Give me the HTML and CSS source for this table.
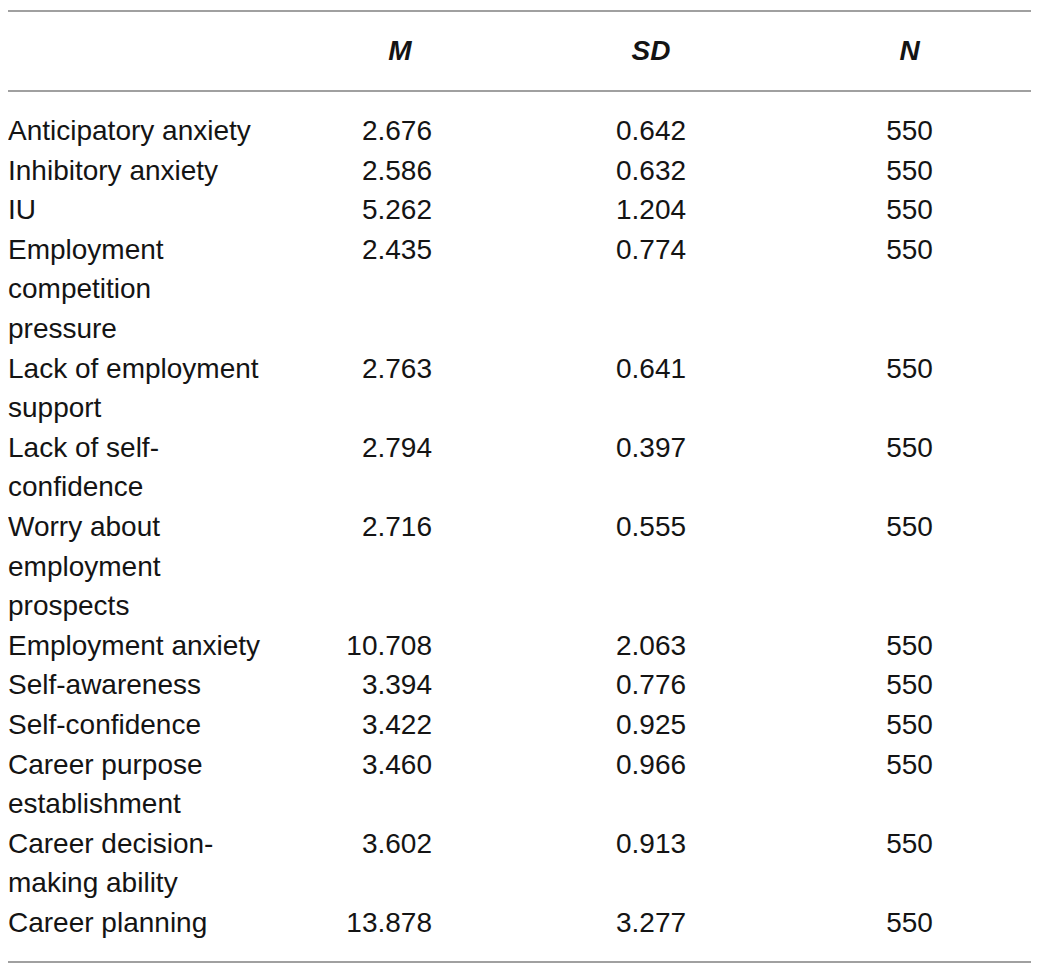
FILE: index.html
```html
<!DOCTYPE html>
<html>
<head>
<meta charset="utf-8">
<link rel="stylesheet" href="styles.css">
</head>
<body>
<table class="stats">
  <colgroup>
    <col class="c-label">
    <col class="c-m">
    <col class="c-sd">
    <col class="c-n">
  </colgroup>
  <thead>
    <tr>
      <th class="label"></th>
      <th class="m">M</th>
      <th class="sd">SD</th>
      <th class="n">N</th>
    </tr>
  </thead>
  <tbody>
    <tr class="first"><td class="label">Anticipatory anxiety</td><td class="m">2.676</td><td class="sd">0.642</td><td class="n">550</td></tr>
    <tr><td class="label">Inhibitory anxiety</td><td class="m">2.586</td><td class="sd">0.632</td><td class="n">550</td></tr>
    <tr><td class="label">IU</td><td class="m">5.262</td><td class="sd">1.204</td><td class="n">550</td></tr>
    <tr><td class="label">Employment competition pressure</td><td class="m">2.435</td><td class="sd">0.774</td><td class="n">550</td></tr>
    <tr><td class="label">Lack of employment support</td><td class="m">2.763</td><td class="sd">0.641</td><td class="n">550</td></tr>
    <tr><td class="label">Lack of self-confidence</td><td class="m">2.794</td><td class="sd">0.397</td><td class="n">550</td></tr>
    <tr><td class="label">Worry about employment prospects</td><td class="m">2.716</td><td class="sd">0.555</td><td class="n">550</td></tr>
    <tr><td class="label">Employment anxiety</td><td class="m">10.708</td><td class="sd">2.063</td><td class="n">550</td></tr>
    <tr><td class="label">Self-awareness</td><td class="m">3.394</td><td class="sd">0.776</td><td class="n">550</td></tr>
    <tr><td class="label">Self-confidence</td><td class="m">3.422</td><td class="sd">0.925</td><td class="n">550</td></tr>
    <tr><td class="label">Career purpose establishment</td><td class="m">3.460</td><td class="sd">0.966</td><td class="n">550</td></tr>
    <tr><td class="label">Career decision-making ability</td><td class="m">3.602</td><td class="sd">0.913</td><td class="n">550</td></tr>
    <tr class="last"><td class="label">Career planning</td><td class="m">13.878</td><td class="sd">3.277</td><td class="n">550</td></tr>
  </tbody>
</table>
</body>
</html>
```
FILE: styles.css
```css
html, body {
  background: #ffffff;
}
body {
  margin: 10px 8px 0 8px;
  font-family: "Liberation Sans", Arial, sans-serif;
  font-size: 28px;
  color: #141414;
}
.stats {
  width: 100%;
  border-collapse: collapse;
  table-layout: fixed;
}
.c-label { width: 256px; }
.c-m { width: 258px; }
.c-sd { width: 258px; }
.c-n { width: auto; }

.stats th {
  height: 78px;
  padding: 0;
  font-weight: bold;
  font-style: italic;
  border-top: 2px solid #a0a0a0;
  border-bottom: 2px solid #a0a0a0;
  text-align: center;
  vertical-align: middle;
  line-height: 32px;
}
.stats th.m {
  padding-left: 14px;
}
.stats td {
  padding: 0;
  line-height: 39.6px;
  vertical-align: top;
}
.stats td.label {
  text-align: left;
}
.stats td.m {
  text-align: right;
  padding-right: 90px;
}
.stats td.sd {
  text-align: center;
}
.stats td.n,
.stats th.n {
  text-align: center;
  padding-left: 8px;
}
.stats tr.first td {
  padding-top: 19px;
}
.stats tr.last td {
  padding-bottom: 19px;
  border-bottom: 2px solid #a0a0a0;
}
```
